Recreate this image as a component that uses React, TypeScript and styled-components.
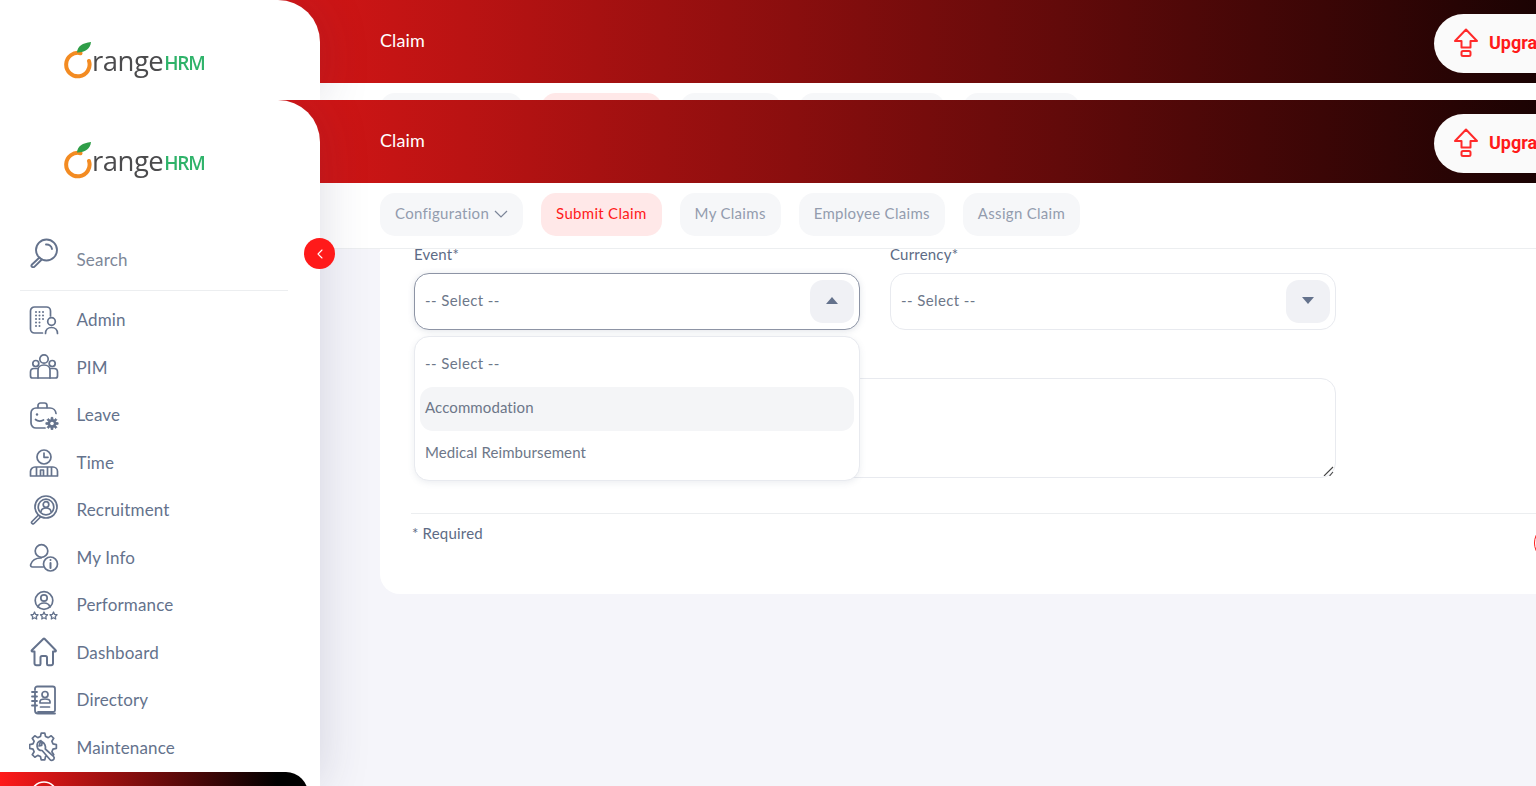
import styled, { createGlobalStyle } from "styled-components";
import { ChevronLeft } from "lucide-react";
import type { ReactNode } from "react";

const GlobalStyle = createGlobalStyle`
  html, body {
    margin: 0;
    height: 100%;
    overflow: hidden;
    background: #f5f5fa;
  }
  body, textarea {
    font-family: "Lato", "Noto Sans", sans-serif;
  }
  * {
    box-sizing: border-box;
  }
`;

const Page = styled.div`
  width: 1536px;
  height: 786px;
  overflow: hidden;
  display: flex;
  flex-direction: column;
`;

const Shell = styled.div<{ $ghost?: boolean }>`
  display: flex;
  flex: ${(p) => (p.$ghost ? "0 0 100px" : "1")};
  min-height: 0;
  overflow: hidden;
`;

const Sidebar = styled.aside`
  position: relative;
  z-index: 2;
  flex: 0 0 320px;
  background: #fff;
  border-top-right-radius: 42px;
  box-shadow: 0 0 50px rgba(50, 50, 90, 0.17);
`;

const LogoBox = styled.div`
  height: 100px;
  padding: 42px 0 0 64px;
  display: flex;
  align-items: flex-start;
  filter: blur(0.35px);
`;

const LogoWord = styled.span`
  margin: 1px 0 0 0;
  font-family: "Open Sans", sans-serif;
  font-size: 27.5px;
  line-height: 36px;
  letter-spacing: -0.5px;
  color: #4b4b4d;
`;

const LogoHrm = styled.span`
  margin: 8px 0 0 1px;
  font-family: "Open Sans", sans-serif;
  font-size: 19px;
  font-weight: 600;
  line-height: 26px;
  letter-spacing: -1.2px;
  color: #2fb36a;
`;

const SearchRow = styled.div`
  height: 91px;
  margin: 0 32px 0 20px;
  padding: 38px 0 0 9px;
  display: flex;
  align-items: flex-start;
  gap: 17.5px;
  border-bottom: 1px solid #eceef0;
  font-size: 17px;
  letter-spacing: 0.2px;
  color: #7d8798;
  span {
    margin-top: 11px;
  }
`;

const CollapseButton = styled.button`
  position: absolute;
  top: 138px;
  right: -15px;
  width: 31px;
  height: 31px;
  padding: 0;
  border: none;
  border-radius: 50%;
  background: #ff1a1a;
  color: #fff;
  display: flex;
  align-items: center;
  justify-content: center;
`;

const NavList = styled.nav`
  margin-top: 5px;
  display: flex;
  flex-direction: column;
`;

const NavItem = styled.div<{ $active?: boolean }>`
  flex: 0 0 47.5px;
  height: 47.5px;
  margin-right: 12px;
  padding-left: 29px;
  display: flex;
  align-items: center;
  gap: 17.5px;
  font-size: 17px;
  letter-spacing: 0.15px;
  color: ${(p) => (p.$active ? "#fff" : "#64728c")};
  ${(p) =>
    p.$active &&
    `
    margin-top: 0.5px;
    background: linear-gradient(90deg, #ff1a1a 0%, #000 90%);
    border-top-right-radius: 22px;
    border-bottom-right-radius: 22px;
  `}
`;

const Main = styled.main`
  flex: 1;
  min-width: 0;
  margin-left: -320px;
  display: flex;
  flex-direction: column;
`;

const TopBar = styled.header`
  flex: 0 0 83px;
  padding-left: 380px;
  display: flex;
  align-items: center;
  justify-content: space-between;
  background: linear-gradient(90deg, #ff1a1a 0%, #000 112%);
`;

const PageTitle = styled.h1`
  margin: 0;
  padding-bottom: 3px;
  font-size: 18px;
  font-weight: 400;
  letter-spacing: 0.1px;
  color: #fff;
`;

const UpgradeButton = styled.button`
  flex: 0 0 170px;
  height: 59px;
  margin: 4px -68px 0 0;
  padding: 0 0 2px 19px;
  border: none;
  border-radius: 30px;
  background: #fafafa;
  display: flex;
  align-items: center;
  gap: 10px;
  font-family: "Roboto", sans-serif;
  font-size: 18px;
  font-weight: 700;
  color: #ff1a1a;
`;

const TabBar = styled.div`
  flex: 0 0 66px;
  padding: 10px 0 0 380px;
  display: flex;
  align-items: flex-start;
  background: #fff;
  border-bottom: 1px solid #eceef0;
`;

const Tab = styled.div<{ $active?: boolean; $gap: number }>`
  height: 43px;
  margin-right: ${(p) => p.$gap}px;
  padding: 0 15px 3px;
  display: flex;
  align-items: center;
  gap: 5px;
  border-radius: 15px;
  font-size: 15px;
  letter-spacing: 0.3px;
  background: ${(p) => (p.$active ? "#ffe8e8" : "#f6f7f9")};
  color: ${(p) => (p.$active ? "#ff1a1a" : "#939cae")};
`;

const TabChevron = styled.svg`
  margin-top: 2px;
  width: 14px;
  height: 8px;
  fill: none;
  stroke: #7b8598;
  stroke-width: 1.2;
`;

const Content = styled.div`
  flex: 1;
  padding-left: 380px;
  min-height: 0;
`;

const Card = styled.section`
  width: 1240px;
  height: 345px;
  padding: 0 31px;
  background: #fff;
  border-radius: 0 0 20px 20px;
`;

const FormGrid = styled.div`
  display: grid;
  grid-template-columns: 446px 446px;
  column-gap: 30px;
  padding-left: 3px;
`;

const Field = styled.div`
  position: relative;
  display: flex;
  flex-direction: column;
`;

const Label = styled.label`
  height: 24px;
  line-height: 10px;
  font-size: 15px;
  letter-spacing: 0.2px;
  color: #5d6b85;
`;

const SelectBox = styled.div<{ $open?: boolean }>`
  height: 57px;
  padding: 0 5px 0 10px;
  display: flex;
  align-items: center;
  justify-content: space-between;
  background: #fff;
  border: 1px solid ${(p) => (p.$open ? "#8d94a5" : "#e8eaef")};
  border-radius: 15px;
  box-shadow: ${(p) => (p.$open ? "0 1px 6px rgba(100, 114, 140, 0.2)" : "none")};
  span {
    padding-bottom: 3px;
  }
`;

const Placeholder = styled.span`
  font-size: 15px;
  letter-spacing: 0.4px;
  color: #6d7789;
`;

const SelectToggle = styled.div`
  width: 44px;
  height: 43px;
  display: flex;
  align-items: center;
  justify-content: center;
  border-radius: 13px;
  background: #f0f1f5;
`;

const Caret = styled.div<{ $up?: boolean }>`
  width: 0;
  height: 0;
  margin-bottom: 2px;
  border-left: 6px solid transparent;
  border-right: 6px solid transparent;
  ${(p) =>
    p.$up ? "border-bottom: 7px solid #64728c;" : "border-top: 7px solid #64728c;"}
`;

const Dropdown = styled.div`
  position: absolute;
  top: 87px;
  left: 0;
  z-index: 3;
  width: 446px;
  height: 145px;
  padding: 5px;
  background: #fff;
  border: 1px solid #e8eaef;
  border-radius: 15px;
  box-shadow: 0 2px 6px rgba(100, 114, 140, 0.12);
`;

const Option = styled.div<{ $hover?: boolean }>`
  height: 44.5px;
  padding: 0 0 3px 5px;
  display: flex;
  align-items: center;
  border-radius: 13px;
  font-size: 15px;
  letter-spacing: 0.1px;
  color: #6d7789;
  background: ${(p) => (p.$hover ? "#f4f5f7" : "transparent")};
`;

const NoteWrap = styled.div`
  position: relative;
  width: 922px;
  height: 100px;
  margin: 48px 0 0 3px;
`;

const NoteBox = styled.textarea`
  display: block;
  width: 100%;
  height: 100%;
  border: 1px solid #e8eaef;
  border-radius: 15px;
  background: #fff;
  resize: none;
`;

const ResizeGrip = styled.svg`
  position: absolute;
  right: 2px;
  bottom: 2px;
  width: 11px;
  height: 10px;
  fill: none;
  stroke: #444;
  stroke-width: 1.1;
`;

const FormFooter = styled.div`
  margin-top: 35px;
  padding: 10px 0 0 1px;
  border-top: 1px solid #eceef0;
  display: flex;
  align-items: flex-start;
  font-size: 15px;
  letter-spacing: 0.2px;
  white-space: nowrap;
  color: #5d6b85;
`;

const CancelButton = styled.button`
  flex: none;
  margin: 0 0 0 1051px;
  width: 100px;
  height: 38px;
  border: 1px solid #ff1a1a;
  border-radius: 19px;
  background: #fff;
`;

const Svg = styled.svg`
  flex: none;
  width: 30px;
  height: 30px;
  fill: none;
  stroke: #64728c;
  stroke-width: 1.7;
  stroke-linecap: round;
  stroke-linejoin: round;
`;

const ActiveSvg = styled(Svg)`
  stroke: #fff;
`;

const UpgradeIcon = styled.svg`
  flex: none;
  width: 26px;
  height: 30px;
  fill: none;
  stroke: #ff2a2a;
  stroke-width: 2;
  stroke-linejoin: round;
`;

// outline of a cog, used by the leave and maintenance icons
function gearPath(cx: number, cy: number, outer: number, inner: number, teeth: number) {
  const step = (Math.PI * 2) / teeth;
  const pts: string[] = [];
  for (let i = 0; i < teeth; i++) {
    const a = i * step - Math.PI / 2;
    [
      [inner, a - step * 0.32],
      [outer, a - step * 0.17],
      [outer, a + step * 0.17],
      [inner, a + step * 0.32],
    ].forEach(([r, t]) => {
      pts.push(`${(cx + r * Math.cos(t)).toFixed(2)} ${(cy + r * Math.sin(t)).toFixed(2)}`);
    });
  }
  return `M${pts.join("L")}Z`;
}

function Logo() {
  return (
    <LogoBox>
      <svg width="28" height="37" viewBox="0 0 28 37" style={{ flex: "none" }}>
        <path
          d="M16.5 11.2A11.700 11.700 0 1 0 25 19"
          fill="none"
          stroke="#f38b22"
          strokeWidth="4"
          strokeLinecap="round"
        />
        <path d="M13 10.500C13.500 4 18.500 1 27 0c-.6 6-5 10.500-14 10.500z" fill="#2f9e48" />
      </svg>
      <LogoWord>range</LogoWord>
      <LogoHrm>HRM</LogoHrm>
    </LogoBox>
  );
}

const icons: Record<string, ReactNode> = {
  search: (
    <>
      <circle cx="17.500" cy="12" r="10.500" strokeWidth="1.900" />
      <path d="M10.500 19.500 3 26.500a1.600 1.600 0 0 0 2.300 2.300L12.800 21.500" strokeWidth="1.900" />
      <path d="M17 6.500a5.500 5.500 0 0 1 6 4.500" strokeWidth="1.900" />
    </>
  ),
  admin: (
    <>
      <path d="M13.500 28H5.500a4 4 0 0 1-4-4V6a4 4 0 0 1 4-4h12a4 4 0 0 1 4 4v5" />
      <path d="M7 7h.01M10.500 7h.01M14 7h.01M7 10.500h.01M10.500 10.500h.01M14 10.500h.01M7 14h.01M10.500 14h.01M14 14h.01M7 17.500h.01M10.500 17.500h.01M7 21h.01M10.500 21h.01" strokeWidth="2" />
      <circle cx="22.500" cy="16.500" r="3.800" />
      <path d="M16.500 28.500c0-3.500 2.500-6 6-6s6 2.500 6 6" />
    </>
  ),
  pim: (
    <>
      <circle cx="15" cy="7" r="4.200" />
      <circle cx="6.800" cy="11.500" r="3" />
      <circle cx="23.200" cy="11.500" r="3" />
      <path d="M9 26v-8c0-3 2.500-5 6-5s6 2 6 5v8z" />
      <path d="M9 16.500H5c-2 0-3.500 1.500-3.500 3.500v4c0 1.200.8 2 2 2H9M21 16.500h4c2 0 3.500 1.500 3.500 3.500v4c0 1.200-.8 2-2 2H21" />
    </>
  ),
  leave: (
    <>
      <path d="M9 7.500V5.500a2.500 2.500 0 0 1 2.500-2.500h4a2.500 2.500 0 0 1 2.500 2.500v2" />
      <path d="M16 28H7a5 5 0 0 1-5-5V13a5 5 0 0 1 5-5h14a6 6 0 0 1 6 5.500" />
      <path d="M8 14.500h.01" strokeWidth="2.400" />
      <path d="M6.500 19.500c2 1.800 5 2 8 .5" />
      <path d={gearPath(23, 23.500, 6.200, 4.200, 8)} fill="#64728c" strokeWidth="0.8" />
      <circle cx="23" cy="23.500" r="1.800" fill="#fff" stroke="none" />
    </>
  ),
  time: (
    <>
      <circle cx="15" cy="10" r="7" />
      <path d="M15 6v4.300h4" />
      <path d="M1.500 29v-4.500A4.500 4.500 0 0 1 6 20h18a4.500 4.500 0 0 1 4.500 4.500V29zM7.500 20.500V29M11.500 23h3v6h-3zM18.500 20.500V29M22.500 20.500V29" />
    </>
  ),
  recruitment: (
    <>
      <circle cx="17" cy="12" r="11" />
      <circle cx="17" cy="12" r="7.800" />
      <circle cx="17" cy="9.500" r="2.800" />
      <path d="M12 16.500c.5-2.300 2.500-3.500 5-3.500s4.500 1.200 5 3.500" />
      <path d="M9.500 20 3 26.500a1.400 1.400 0 0 0 2 2l6.500-6.500" />
    </>
  ),
  info: (
    <>
      <circle cx="12.500" cy="9" r="6.300" />
      <path d="M14 25H3.500c-1.500 0-2.200-1.200-1.800-2.500C3 18.500 7 16 12 16" />
      <circle cx="21.500" cy="22" r="7" />
      <path d="M21.500 21v5M21.500 18h.01" strokeWidth="2" />
    </>
  ),
  performance: (
    <>
      <circle cx="15" cy="10.500" r="8.800" />
      <circle cx="15" cy="8" r="3.200" />
      <path d="M9 17c.8-2.700 3.200-4 6-4s5.200 1.300 6 4" />
      <path d="M5.500 22l1.100 2.400 2.400.3-1.700 1.800.4 2.500-2.200-1.200-2.200 1.200.4-2.500L2 24.700l2.400-.3zM15 22l1.100 2.400 2.400.3-1.700 1.800.4 2.500-2.200-1.200-2.200 1.200.4-2.500-1.700-1.800 2.400-.3zM24.500 22l1.100 2.400 2.400.3-1.700 1.800.4 2.500-2.200-1.200-2.200 1.200.4-2.500-1.700-1.800 2.400-.3z" strokeWidth="1.300" />
    </>
  ),
  home: (
    <path
      d="M5.500 14.500V26.500a1.800 1.800 0 0 0 1.800 1.800h3a1.200 1.200 0 0 0 1.200-1.200v-6.600a1.500 1.500 0 0 1 1.500-1.500h3.500a1.500 1.500 0 0 1 1.500 1.500v6.600a1.200 1.200 0 0 0 1.200 1.200h3a1.800 1.800 0 0 0 1.800-1.800V14.500h2.200a.7.7 0 0 0 .5-1.200L15.500 1.800a.7.7 0 0 0-1 0L2.800 13.300a.7.7 0 0 0 .5 1.200z"
      strokeWidth="2"
    />
  ),
  directory: (
    <>
      <path d="M6 5V3.800A2.300 2.300 0 0 1 8.300 1.500h15.400A2.300 2.300 0 0 1 26 3.800v21.400a1.800 1.800 0 0 1-1.800 1.800H9" strokeWidth="1.800" />
      <path d="M6 7v18.500A3 3 0 0 0 9 28.500h17" strokeWidth="1.800" />
      <path d="M3 7h5M3 11.500h5M3 16h5M3 20.500h5" strokeWidth="1.800" />
      <circle cx="16" cy="9.500" r="3" />
      <path d="M11 18v-1.500c0-1.500 1.500-2.500 5-2.500s5 1 5 2.500V18zM11.500 22h9" />
    </>
  ),
  maintenance: (
    <>
      <path d={gearPath(14, 14.500, 13.500, 10.300, 8)} />
      <path
        d="M12 8.500c-2.500.8-4.200 3.200-3.900 5.800.3 2.500 2.500 4.200 5 4.200l7.800 9a2.400 2.400 0 0 0 3.900-.2 2.400 2.400 0 0 0-.3-3L16.300 17c.5-2.900-.9-5.900-3.200-7.300l-.4 3.700-2.700.6z"
        fill="#fff"
      />
    </>
  ),
  claim: (
    <>
      <circle cx="15" cy="15" r="13" />
      <path d="M15 8v8M15 20h.01" />
    </>
  ),
};

const navItems = [
  ["admin", "Admin"],
  ["pim", "PIM"],
  ["leave", "Leave"],
  ["time", "Time"],
  ["recruitment", "Recruitment"],
  ["info", "My Info"],
  ["performance", "Performance"],
  ["home", "Dashboard"],
  ["directory", "Directory"],
  ["maintenance", "Maintenance"],
];

const tabs = [
  { label: "Submit Claim", active: true, gap: 18 },
  { label: "My Claims", gap: 18 },
  { label: "Employee Claims", gap: 18 },
  { label: "Assign Claim", gap: 0 },
];

function Icon({ name }: { name: string }) {
  return <Svg viewBox="0 0 30 30">{icons[name]}</Svg>;
}

function Header() {
  return (
    <>
      <TopBar>
        <PageTitle>Claim</PageTitle>
        <UpgradeButton>
          <UpgradeIcon viewBox="0 0 26 30">
            <path d="M13 1.500 2 13h6.500v6.500h9V13H24z" />
            <rect x="8.500" y="23" width="9" height="5" rx="1.500" />
          </UpgradeIcon>
          Upgrade
        </UpgradeButton>
      </TopBar>
      <TabBar>
        <Tab $gap={18}>
          Configuration
          <TabChevron viewBox="0 0 14 8">
            <path d="M1 1l6 6 6-6" />
          </TabChevron>
        </Tab>
        {tabs.map((t) => (
          <Tab key={t.label} $active={t.active} $gap={t.gap}>
            {t.label}
          </Tab>
        ))}
      </TabBar>
    </>
  );
}

export default function App() {
  return (
    <Page>
      <GlobalStyle />
      <Shell $ghost>
        <Sidebar>
          <Logo />
        </Sidebar>
        <Main>
          <Header />
        </Main>
      </Shell>
      <Shell>
        <Sidebar>
          <Logo />
          <CollapseButton>
            <ChevronLeft size={16} strokeWidth={1.6} />
          </CollapseButton>
          <SearchRow>
            <Icon name="search" />
            <span>Search</span>
          </SearchRow>
          <NavList>
            {navItems.map(([icon, label]) => (
              <NavItem key={label}>
                <Icon name={icon} />
                {label}
              </NavItem>
            ))}
            <NavItem $active>
              <ActiveSvg viewBox="0 0 30 30">{icons.claim}</ActiveSvg>
              Claim
            </NavItem>
          </NavList>
        </Sidebar>
        <Main>
          <Header />
          <Content>
            <Card>
              <FormGrid>
                <Field>
                  <Label>Event*</Label>
                  <SelectBox $open>
                    <Placeholder>-- Select --</Placeholder>
                    <SelectToggle>
                      <Caret $up />
                    </SelectToggle>
                  </SelectBox>
                  <Dropdown>
                    <Option>
                      <Placeholder>-- Select --</Placeholder>
                    </Option>
                    <Option $hover>Accommodation</Option>
                    <Option>Medical Reimbursement</Option>
                  </Dropdown>
                </Field>
                <Field>
                  <Label>Currency*</Label>
                  <SelectBox>
                    <Placeholder>-- Select --</Placeholder>
                    <SelectToggle>
                      <Caret />
                    </SelectToggle>
                  </SelectBox>
                </Field>
              </FormGrid>
              <NoteWrap>
                <NoteBox />
                <ResizeGrip viewBox="0 0 11 10">
                  <path d="M1 10 10 1M6.500 10 10 6" />
                </ResizeGrip>
              </NoteWrap>
              <FormFooter>
                * Required
                <CancelButton />
              </FormFooter>
            </Card>
          </Content>
        </Main>
      </Shell>
    </Page>
  );
}
